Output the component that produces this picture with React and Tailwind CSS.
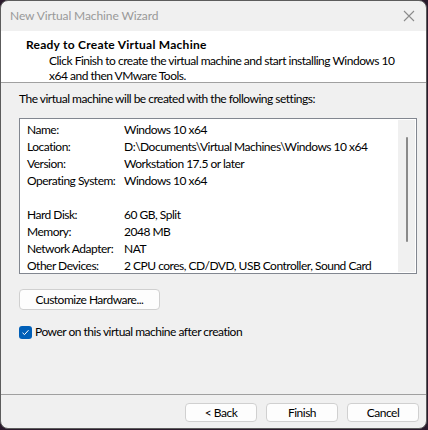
import React from "react";

const rows = [
  ["Name:", "Windows 10 x64"],
  ["Location:", "D:\\Documents\\Virtual Machines\\Windows 10 x64"],
  ["Version:", "Workstation 17.5 or later"],
  ["Operating System:", "Windows 10 x64"],
  ["", ""],
  ["Hard Disk:", "60 GB, Split"],
  ["Memory:", "2048 MB"],
  ["Network Adapter:", "NAT"],
  ["Other Devices:", "2 CPU cores, CD/DVD, USB Controller, Sound Card"],
];

const font = { fontFamily: 'Lato, "Noto Sans", sans-serif' };

const Button = ({ children, className = "" }) => (
  <button
    className={`h-[19px] rounded-[4px] border border-[#d0d0d0] bg-[#fdfdfd] text-[12px] tracking-[-0.5px] leading-none text-black ${className}`}
  >
    {children}
  </button>
);

export default function App() {
  return (
    <div className="w-[428px] h-[430px] bg-[#2a1a2c]" style={font}>
      <div className="w-[427px] h-[429px] rounded-[8px] border border-[#5c5c5c] bg-[#f0f0f0] overflow-hidden flex flex-col">
        {/* title bar */}
        <div className="h-[30px] flex items-center justify-between pl-[9px] pr-[11px]">
          <span className="text-[12px] tracking-[-0.1px] text-[#999999]">New Virtual Machine Wizard</span>
          <svg width="12" height="12" viewBox="0 0 12 12" className="text-[#8c8c8c]">
            <path d="M1 1L11 11M11 1L1 11" stroke="currentColor" strokeWidth="1.1" />
          </svg>
        </div>

        {/* header */}
        <div className="h-[52px] bg-white border-b border-[#a0a0a0] pl-[25px] pt-[6px]">
          <div className="text-[12px] font-bold tracking-[0.25px] leading-[16px] text-black">
            Ready to Create Virtual Machine
          </div>
          <div className="pl-[23px] pr-[30px] text-[12px] tracking-[-0.5px] leading-[15px] text-black">
            Click Finish to create the virtual machine and start installing Windows 10 x64 and then VMware Tools.
          </div>
        </div>

        {/* body */}
        <div className="flex-1 px-[18px] pt-[8px] text-[12px] tracking-[-0.5px] text-black">
          <div className="leading-[16px]">The virtual machine will be created with the following settings:</div>
          <div className="mt-[11px] w-[398px] h-[156px] border border-[#828790] bg-white flex">
            <div className="flex-1 pl-[7px] pt-[2px]">
              {rows.map(([k, v], i) => (
                <div key={i} className="flex h-[17px] items-center whitespace-nowrap">
                  <span className="w-[97px] shrink-0">{k}</span>
                  <span>{v}</span>
                </div>
              ))}
            </div>
            <div className="w-[17px] my-[1px] mr-[1px] bg-[#f0f0f0] flex justify-center pt-[17px]">
              <div className="w-[2px] h-[105px] bg-[#8a8a8a] rounded-full" />
            </div>
          </div>

          <Button className="mt-[15px] w-[141px] h-[21px]">Customize Hardware...</Button>

          <label className="mt-[13px] flex items-center gap-[3px]">
            <span className="w-[13px] h-[13px] rounded-[3px] bg-[#005fb8] flex items-center justify-center">
              <svg width="9" height="9" viewBox="0 0 9 9">
                <path d="M1.5 4.8L3.5 6.6L7.5 2.2" stroke="white" strokeWidth="1" fill="none" />
              </svg>
            </span>
            Power on this virtual machine after creation
          </label>
        </div>

        {/* footer */}
        <div className="h-[34px] border-t border-[#a0a0a0] flex justify-end items-start gap-[9px] pr-[7px] pt-[8px]">
          <Button className="w-[72px]">&lt; Back</Button>
          <Button className="w-[72px]">Finish</Button>
          <Button className="w-[72px]">Cancel</Button>
        </div>
      </div>
    </div>
  );
}
